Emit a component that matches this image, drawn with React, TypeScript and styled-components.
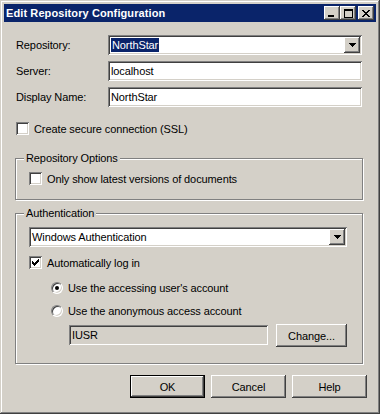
import React from 'react';
import styled, { createGlobalStyle, css } from 'styled-components';

const GlobalStyle = createGlobalStyle`
  html, body {
    margin: 0;
    padding: 0;
    background: #d4d0c8;
  }
  body {
    font-family: "Liberation Sans", Arial, sans-serif;
    font-size: 11px;
    letter-spacing: -0.1px;
    color: #000;
  }
`;

const sunken = css`
  box-shadow: inset 1px 1px #808080, inset -1px -1px #ffffff, inset 2px 2px #404040, inset -2px -2px #d4d0c8;
`;

const raised = css`
  box-shadow: inset -1px -1px #404040, inset 1px 1px #ffffff, inset -2px -2px #808080, inset 2px 2px #d4d0c8;
`;

const Window = styled.div`
  width: 380px;
  height: 414px;
  box-sizing: border-box;
  padding: 4px;
  background: #d4d0c8;
  box-shadow: inset -1px -1px #404040, inset 1px 1px #d4d0c8, inset -2px -2px #808080, inset 2px 2px #ffffff;
  display: flex;
  flex-direction: column;
`;

const TitleBar = styled.div`
  height: 18px;
  background: #0a246a;
  display: flex;
  align-items: center;
  padding: 0 2px;
`;

const TitleText = styled.div`
  flex: 1;
  color: #fff;
  font-weight: bold;
  font-size: 11px;
  letter-spacing: 0.1px;
`;

const CaptionButton = styled.div<{ $gap?: boolean }>`
  width: 16px;
  height: 14px;
  margin-left: ${p => (p.$gap ? '2px' : '0')};
  background: #d4d0c8;
  ${raised};
  display: flex;
  align-items: center;
  justify-content: center;
  svg { display: block; }
`;

const Body = styled.div`
  padding: 13px 13px 0 11px;
  display: flex;
  flex-direction: column;
`;

const FormGrid = styled.div`
  display: grid;
  grid-template-columns: 92px 1fr;
  row-gap: 6px;
  padding: 0 1px;
  align-items: center;
`;

const Label = styled.label`
  white-space: nowrap;
`;

const Field = styled.div<{ $disabled?: boolean; $width?: number }>`
  height: 20px;
  box-sizing: border-box;
  background: ${p => (p.$disabled ? '#d4d0c8' : '#fff')};
  ${sunken};
  display: flex;
  align-items: center;
  padding: 0 3px;
  width: ${p => (p.$width ? `${p.$width}px` : 'auto')};
  flex: ${p => (p.$width ? 'none' : '1')};
`;

const Combo = styled.div`
  height: 20px;
  box-sizing: border-box;
  background: #fff;
  ${sunken};
  display: flex;
  align-items: center;
  padding: 2px;
`;

const ComboText = styled.div`
  flex: 1;
  padding-left: 1px;
  white-space: nowrap;
`;

const Highlight = styled.span`
  background: #0a246a;
  color: #fff;
  padding: 1px 1px;
`;

const DropButton = styled.div`
  width: 16px;
  height: 16px;
  background: #d4d0c8;
  ${raised};
  display: flex;
  align-items: center;
  justify-content: center;
`;

const CheckRow = styled.div<{ $top?: number; $indent?: number }>`
  display: flex;
  align-items: center;
  gap: 5px;
  height: 13px;
  margin-top: ${p => p.$top ?? 0}px;
  padding-left: ${p => p.$indent ?? 0}px;
  white-space: nowrap;
`;

const Check = styled.div`
  width: 13px;
  height: 13px;
  box-sizing: border-box;
  background: #fff;
  ${sunken};
  display: flex;
  align-items: center;
  justify-content: center;
  flex: none;
`;

const Radio = styled.div<{ $checked?: boolean }>`
  width: 12px;
  height: 12px;
  box-sizing: border-box;
  border-radius: 50%;
  background: #fff;
  border: 1px solid;
  border-color: #808080 #ffffff #ffffff #808080;
  box-shadow: inset 1px 1px #404040, inset -1px -1px #d4d0c8;
  display: flex;
  align-items: center;
  justify-content: center;
  flex: none;
  &::after {
    content: '';
    display: ${p => (p.$checked ? 'block' : 'none')};
    width: 4px;
    height: 4px;
    border-radius: 50%;
    background: #000;
  }
`;

const Group = styled.fieldset<{ $top: number }>`
  margin: ${p => p.$top}px 0 0 0;
  padding: 0;
  min-width: 0;
  border: 1px solid #808080;
  box-shadow: 1px 1px 0 #ffffff, inset 1px 1px 0 #ffffff;
`;

const Legend = styled.legend`
  margin-left: 8px;
  padding: 0 2px;
  line-height: 13px;
  font-size: 11px;
  background: #d4d0c8;
`;

const GroupInner = styled.div<{ $bottom: number }>`
  padding: 7px 15px ${p => p.$bottom}px 13px;
  display: flex;
  flex-direction: column;
`;

const RadioList = styled.div`
  display: flex;
  flex-direction: column;
  gap: 10px;
  margin-top: 12px;
  padding-left: 22px;
`;

const AccountRow = styled.div`
  display: flex;
  align-items: flex-start;
  gap: 8px;
  margin-top: 8px;
  padding-left: 40px;
`;

const Button = styled.div<{ $default?: boolean }>`
  width: 75px;
  height: 23px;
  box-sizing: border-box;
  background: #d4d0c8;
  display: flex;
  align-items: center;
  justify-content: center;
  ${raised};
  ${p =>
    p.$default &&
    css`
      border: 1px solid #000;
    `}
`;

const ChangeButton = styled(Button)`
  margin-top: -1px;
`;

const ButtonRow = styled.div`
  display: flex;
  justify-content: flex-end;
  gap: 6px;
  margin-top: 11px;
  margin-right: -4px;
`;

const ArrowDown = () => (
  <svg width="7" height="4" viewBox="0 0 7 4" shapeRendering="crispEdges">
    <path d="M0 0h7v1H0zM1 1h5v1H1zM2 2h3v1H2zM3 3h1v1H3z" fill="#000" />
  </svg>
);

const CheckMark = () => (
  <svg width="7" height="7" viewBox="0 0 7 7" shapeRendering="crispEdges">
    <path
      d="M6 0h1v3H6zM5 1h1v3H5zM4 2h1v3H4zM3 3h1v3H3zM2 4h1v3H2zM1 3h1v3H1zM0 2h1v3H0z"
      fill="#000"
    />
  </svg>
);

const MinIcon = () => (
  <svg width="8" height="7" viewBox="0 0 8 7" shapeRendering="crispEdges">
    <rect x="0" y="5" width="6" height="2" fill="#000" />
  </svg>
);

const MaxIcon = () => (
  <svg width="9" height="9" viewBox="0 0 9 9" shapeRendering="crispEdges">
    <path d="M0 0h9v2H0zM0 2h1v7H0zM8 2h1v7H8zM0 8h9v1H0z" fill="#000" />
  </svg>
);

const CloseIcon = () => (
  <svg width="8" height="7" viewBox="0 0 8 7" shapeRendering="crispEdges">
    <path
      d="M0 0h2v1H0zM6 0h2v1H6zM1 1h2v1H1zM5 1h2v1H5zM2 2h4v1H2zM3 3h2v1H3zM2 4h4v1H2zM1 5h2v1H1zM5 5h2v1H5zM0 6h2v1H0zM6 6h2v1H6z"
      fill="#000"
    />
  </svg>
);

export default function App() {
  return (
    <>
      <GlobalStyle />
      <Window>
        <TitleBar>
          <TitleText>Edit Repository Configuration</TitleText>
          <CaptionButton><MinIcon /></CaptionButton>
          <CaptionButton><MaxIcon /></CaptionButton>
          <CaptionButton $gap><CloseIcon /></CaptionButton>
        </TitleBar>

        <Body>
          <FormGrid>
            <Label>Repository:</Label>
            <Combo>
              <ComboText><Highlight>NorthStar</Highlight></ComboText>
              <DropButton><ArrowDown /></DropButton>
            </Combo>
            <Label>Server:</Label>
            <Field>localhost</Field>
            <Label>Display Name:</Label>
            <Field>NorthStar</Field>
          </FormGrid>

          <CheckRow $top={15} $indent={1}>
            <Check />
            <span>Create secure connection (SSL)</span>
          </CheckRow>

          <Group $top={17}>
            <Legend>Repository Options</Legend>
            <GroupInner $bottom={14}>
              <CheckRow>
                <Check />
                <span>Only show latest versions of documents</span>
              </CheckRow>
            </GroupInner>
          </Group>

          <Group $top={7}>
            <Legend>Authentication</Legend>
            <GroupInner $bottom={16}>
              <Combo>
                <ComboText>Windows Authentication</ComboText>
                <DropButton><ArrowDown /></DropButton>
              </Combo>
              <CheckRow $top={9}>
                <Check><CheckMark /></Check>
                <span>Automatically log in</span>
              </CheckRow>
              <RadioList>
                <CheckRow>
                  <Radio $checked />
                  <span>Use the accessing user's account</span>
                </CheckRow>
                <CheckRow>
                  <Radio />
                  <span>Use the anonymous access account</span>
                </CheckRow>
              </RadioList>
              <AccountRow>
                <Field $disabled $width={199}>IUSR</Field>
                <ChangeButton>Change...</ChangeButton>
              </AccountRow>
            </GroupInner>
          </Group>

          <ButtonRow>
            <Button $default>OK</Button>
            <Button>Cancel</Button>
            <Button>Help</Button>
          </ButtonRow>
        </Body>
      </Window>
    </>
  );
}
